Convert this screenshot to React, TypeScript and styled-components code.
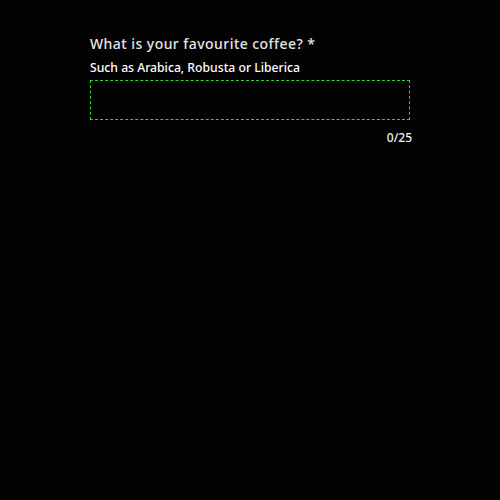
import React from "react";
import styled, { createGlobalStyle } from "styled-components";

const Global = createGlobalStyle`
  html, body { margin: 0; padding: 0; background: #020202; }
  body { font-family: "Noto Sans", "Open Sans", sans-serif; }
`;

const Page = styled.div`
  width: 500px;
  height: 500px;
  background: #020202;
  box-sizing: border-box;
  padding: 34px 88px 0 90px;
`;

const Field = styled.div`
  display: flex;
  flex-direction: column;
  width: 322px;
`;

const Label = styled.label`
  color: #e6e6e6;
  font-size: 14px;
  font-weight: 500;
  letter-spacing: 0.45px;
  line-height: 20px;
`;

const Hint = styled.div`
  color: #ffffff;
  font-size: 12.2px;
  font-weight: 500;
  line-height: 18px;
  margin-top: 5px;
`;

const Input = styled.input`
  box-sizing: border-box;
  width: 320px;
  height: 40px;
  margin-top: 3px;
  background: transparent;
  border: 1px dashed #2fd62f;
  outline: none;
  color: #fff;
  font-family: inherit;
  font-size: 13px;
  padding: 0 8px;
`;

const Counter = styled.div`
  align-self: flex-end;
  color: #f0f0f0;
  font-size: 12px;
  font-weight: 500;
  line-height: 16px;
  margin-top: 10px;
`;

export default function App() {
  return (
    <>
      <Global />
      <Page>
        <Field>
          <Label>What is your favourite coffee? *</Label>
          <Hint>Such as Arabica, Robusta or Liberica</Hint>
          <Input maxLength={25} aria-label="favourite coffee" />
          <Counter>0/25</Counter>
        </Field>
      </Page>
    </>
  );
}
